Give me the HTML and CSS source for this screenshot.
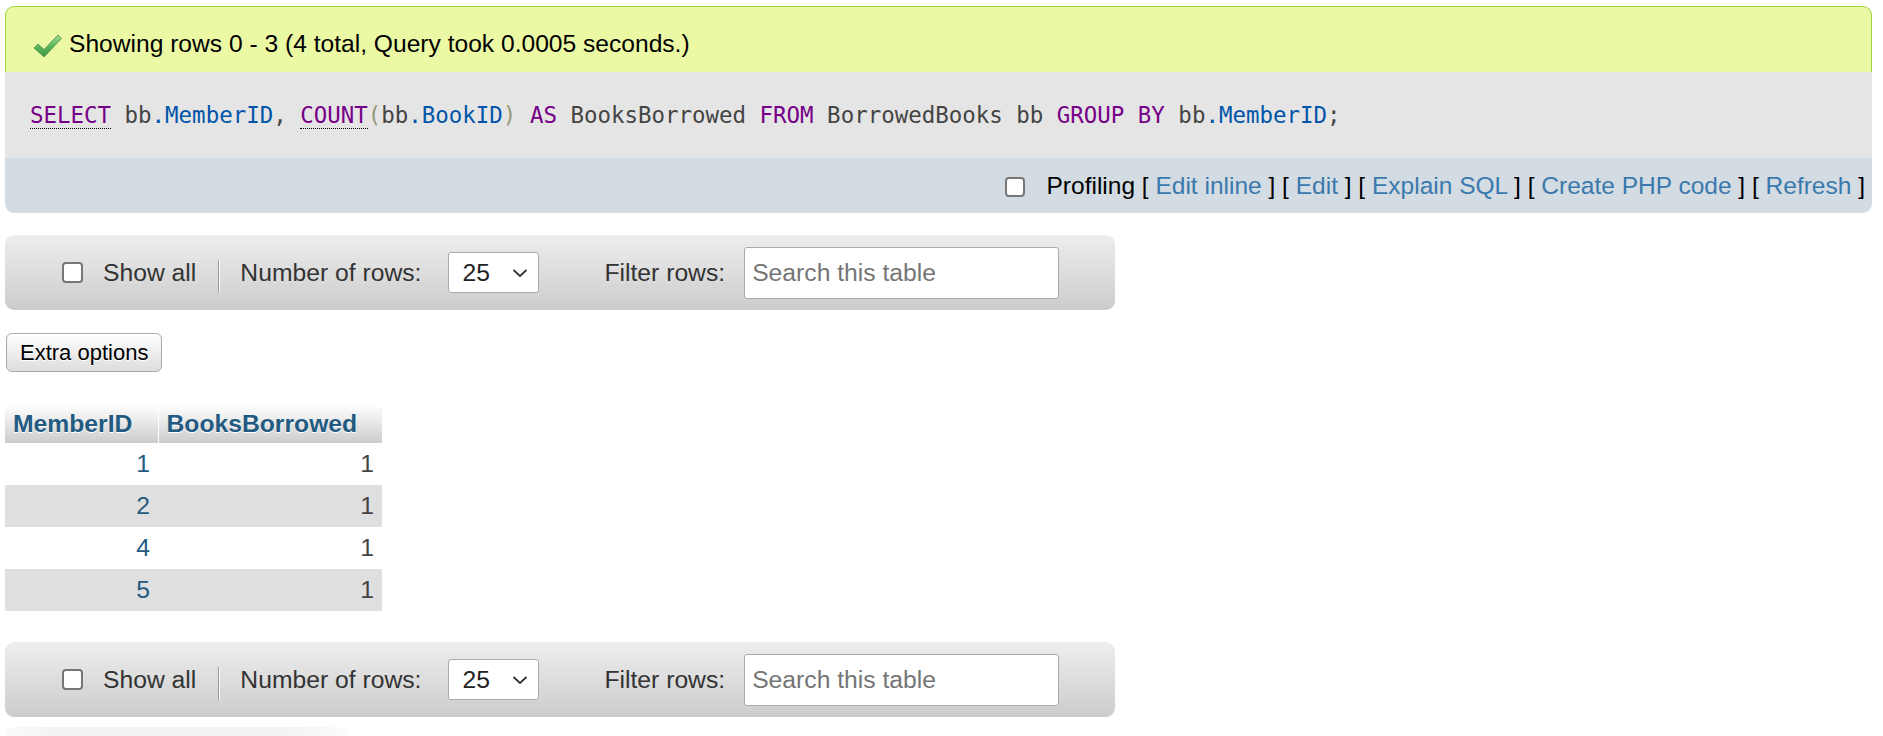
FILE: index.html
```html
<!DOCTYPE html>
<html>
<head>
<meta charset="utf-8">
<link rel="stylesheet" href="styles.css">
</head>
<body>
<div class="result">
  <div class="success">
    <svg class="ok-icon" viewBox="0 0 29 24">
      <defs>
        <linearGradient id="g" x1="0" y1="0" x2="0" y2="1">
          <stop offset="0" stop-color="#9fdc8f"/>
          <stop offset="0.5" stop-color="#5cb85c"/>
          <stop offset="1" stop-color="#3e9440"/>
        </linearGradient>
      </defs>
      <polygon points="1,14 5,10 11,15.5 25,1 28.5,4.5 11,23" fill="url(#g)" stroke="#4a8f4a" stroke-width="0.8" stroke-linejoin="round"/>
    </svg>
    <span>Showing rows 0 - 3 (4 total, Query took 0.0005 seconds.)</span>
  </div>
  <div class="sql"><span class="kw doc">SELECT</span> bb<span class="v2">.MemberID</span>, <span class="kw doc">COUNT</span><span class="br">(</span>bb<span class="v2">.BookID</span><span class="br">)</span> <span class="kw">AS</span> BooksBorrowed <span class="kw">FROM</span> BorrowedBooks bb <span class="kw">GROUP</span> <span class="kw">BY</span> bb<span class="v2">.MemberID</span>;</div>
  <div class="tools">
    <input type="checkbox" class="cb tools-cb">
    <span>Profiling [ <a class="lnk">Edit inline</a> ] [ <a class="lnk">Edit</a> ] [ <a class="lnk">Explain SQL</a> ] [ <a class="lnk">Create PHP code</a> ] [ <a class="lnk">Refresh</a> ]</span>
  </div>
</div>

<div class="nav">
  <input type="checkbox" class="cb">
  <span class="lbl show">Show all</span>
  <span class="sep"></span>
  <span class="lbl rows">Number of rows:</span>
  <div class="select"><span>25</span><svg class="chev" viewBox="0 0 16 10"><polyline points="1.5,2 8,8 14.5,2" fill="none" stroke="#333" stroke-width="1.8"/></svg></div>
  <span class="lbl filter">Filter rows:</span>
  <input type="text" class="search" placeholder="Search this table">
</div>

<button class="extra">Extra options</button>

<table class="data">
  <thead>
    <tr><th class="c1">MemberID</th><th class="c2">BooksBorrowed</th></tr>
  </thead>
  <tbody>
    <tr class="odd"><td class="id">1</td><td>1</td></tr>
    <tr class="even"><td class="id">2</td><td>1</td></tr>
    <tr class="odd"><td class="id">4</td><td>1</td></tr>
    <tr class="even"><td class="id">5</td><td>1</td></tr>
  </tbody>
</table>

<div class="nav nav-bottom">
  <input type="checkbox" class="cb">
  <span class="lbl show">Show all</span>
  <span class="sep"></span>
  <span class="lbl rows">Number of rows:</span>
  <div class="select"><span>25</span><svg class="chev" viewBox="0 0 16 10"><polyline points="1.5,2 8,8 14.5,2" fill="none" stroke="#333" stroke-width="1.8"/></svg></div>
  <span class="lbl filter">Filter rows:</span>
  <input type="text" class="search" placeholder="Search this table">
</div>

<div class="next-block"></div>
</body>
</html>
```
FILE: styles.css
```css
* { box-sizing: border-box; }

html, body { overflow: hidden; }

body {
  margin: 0;
  padding: 6px 11px 0 5px;
  font-family: "Liberation Sans", Arial, sans-serif;
  font-size: 24.7px;
  color: #000;
  background: #fff;
}

.success {
  display: flex;
  align-items: center;
  background: #ebf8a4;
  border: 1px solid #a2d246;
  border-bottom: none;
  border-radius: 9px 9px 0 0;
  padding: 23px 0 14px 27px;
  line-height: 28px;
  font-size: 24.6px;
}

.ok-icon {
  width: 29px;
  height: 24px;
  margin: 3px 7px 0 0;
  flex: none;
}

.sql {
  background: #e5e5e5;
  padding: 30px 25px;
  font-family: "DejaVu Sans Mono", monospace;
  font-size: 22.45px;
  line-height: 26px;
  color: #444;
  white-space: pre;
}

.sql .kw { color: #770088; }
.sql .v2 { color: #0055aa; }
.sql .br { color: #999977; }
.sql .doc { border-bottom: 1px dotted #000; }

.tools {
  background: #d3dce3;
  border-radius: 0 0 9px 9px;
  padding: 14px 7px 13px;
  display: flex;
  justify-content: flex-end;
  align-items: center;
  line-height: 28px;
  font-size: 24.5px;
}

.lnk { color: #3a79ad; text-decoration: none; }

.cb {
  -webkit-appearance: none;
  appearance: none;
  width: 21px;
  height: 21px;
  margin: 0;
  border: 2px solid #767676;
  border-radius: 4px;
  background: #fff;
  flex: none;
}

.tools-cb {
  width: 20px;
  height: 20px;
  margin: 1px 22px 0 0;
}

.nav {
  margin-top: 22px;
  width: 1110px;
  height: 75px;
  background: linear-gradient(#eeeeee, #cccccc);
  border-radius: 9px;
  display: flex;
  align-items: center;
  padding-left: 57px;
  color: #333;
  line-height: 28px;
}

.nav .show { margin-left: 20px; }

.sep {
  width: 2px;
  height: 33px;
  margin-left: 22px;
  border-left: 1px solid #999;
  border-right: 1px solid #fafafa;
  margin-top: 8px;
}

.nav .rows { margin-left: 20px; }

.select {
  margin-left: 27px;
  width: 91px;
  height: 41px;
  background: #fff;
  border: 1px solid #aaa;
  border-radius: 3px;
  display: flex;
  align-items: center;
  padding-left: 13px;
  color: #222;
}

.chev {
  width: 16px;
  height: 10px;
  margin-left: 22px;
}

.nav .filter { margin-left: 65px; }

.search {
  margin-left: 19px;
  width: 315px;
  height: 52px;
  border: 1px solid #aaa;
  border-radius: 3px;
  padding: 0 7px;
  font-family: "Liberation Sans", Arial, sans-serif;
  font-size: 24.7px;
  background: #fff;
  color: #333;
  outline: none;
}

.search::placeholder { color: #757575; }

.extra {
  display: block;
  margin: 23px 0 0 1px;
  height: 39px;
  padding: 0 13px;
  font-family: "Liberation Sans", Arial, sans-serif;
  font-size: 22px;
  color: #000;
  background: linear-gradient(#ffffff, #dddddd);
  border: 1px solid #aaa;
  border-radius: 6px;
  text-shadow: 0 1px 0 #fff;
}

.data {
  margin-top: 33px;
  border-collapse: collapse;
  width: 377px;
}

.data th {
  height: 38px;
  padding: 0 8px;
  text-align: left;
  font-weight: bold;
  color: #235a81;
  text-shadow: 0 1px 0 #fff;
  background: linear-gradient(#ffffff, #cccccc);
}

.data th.c1 { width: 153px; }
.data th.c2 { border-left: 1px solid #fff; }

.data td {
  height: 42px;
  padding: 0 8px;
  text-align: right;
  color: #444;
}

.data td.id { color: #235a81; }

.data tr.even td { background: #dfdfdf; }

.nav-bottom { margin-top: 31px; }

.next-block {
  margin-top: 10px;
  width: 345px;
  height: 20px;
  border-radius: 8px 8px 0 0;
  background: linear-gradient(90deg, rgba(240,240,240,0.3), #f3f3f3 15%, #f3f3f3 80%, rgba(240,240,240,0.2));
}
```
